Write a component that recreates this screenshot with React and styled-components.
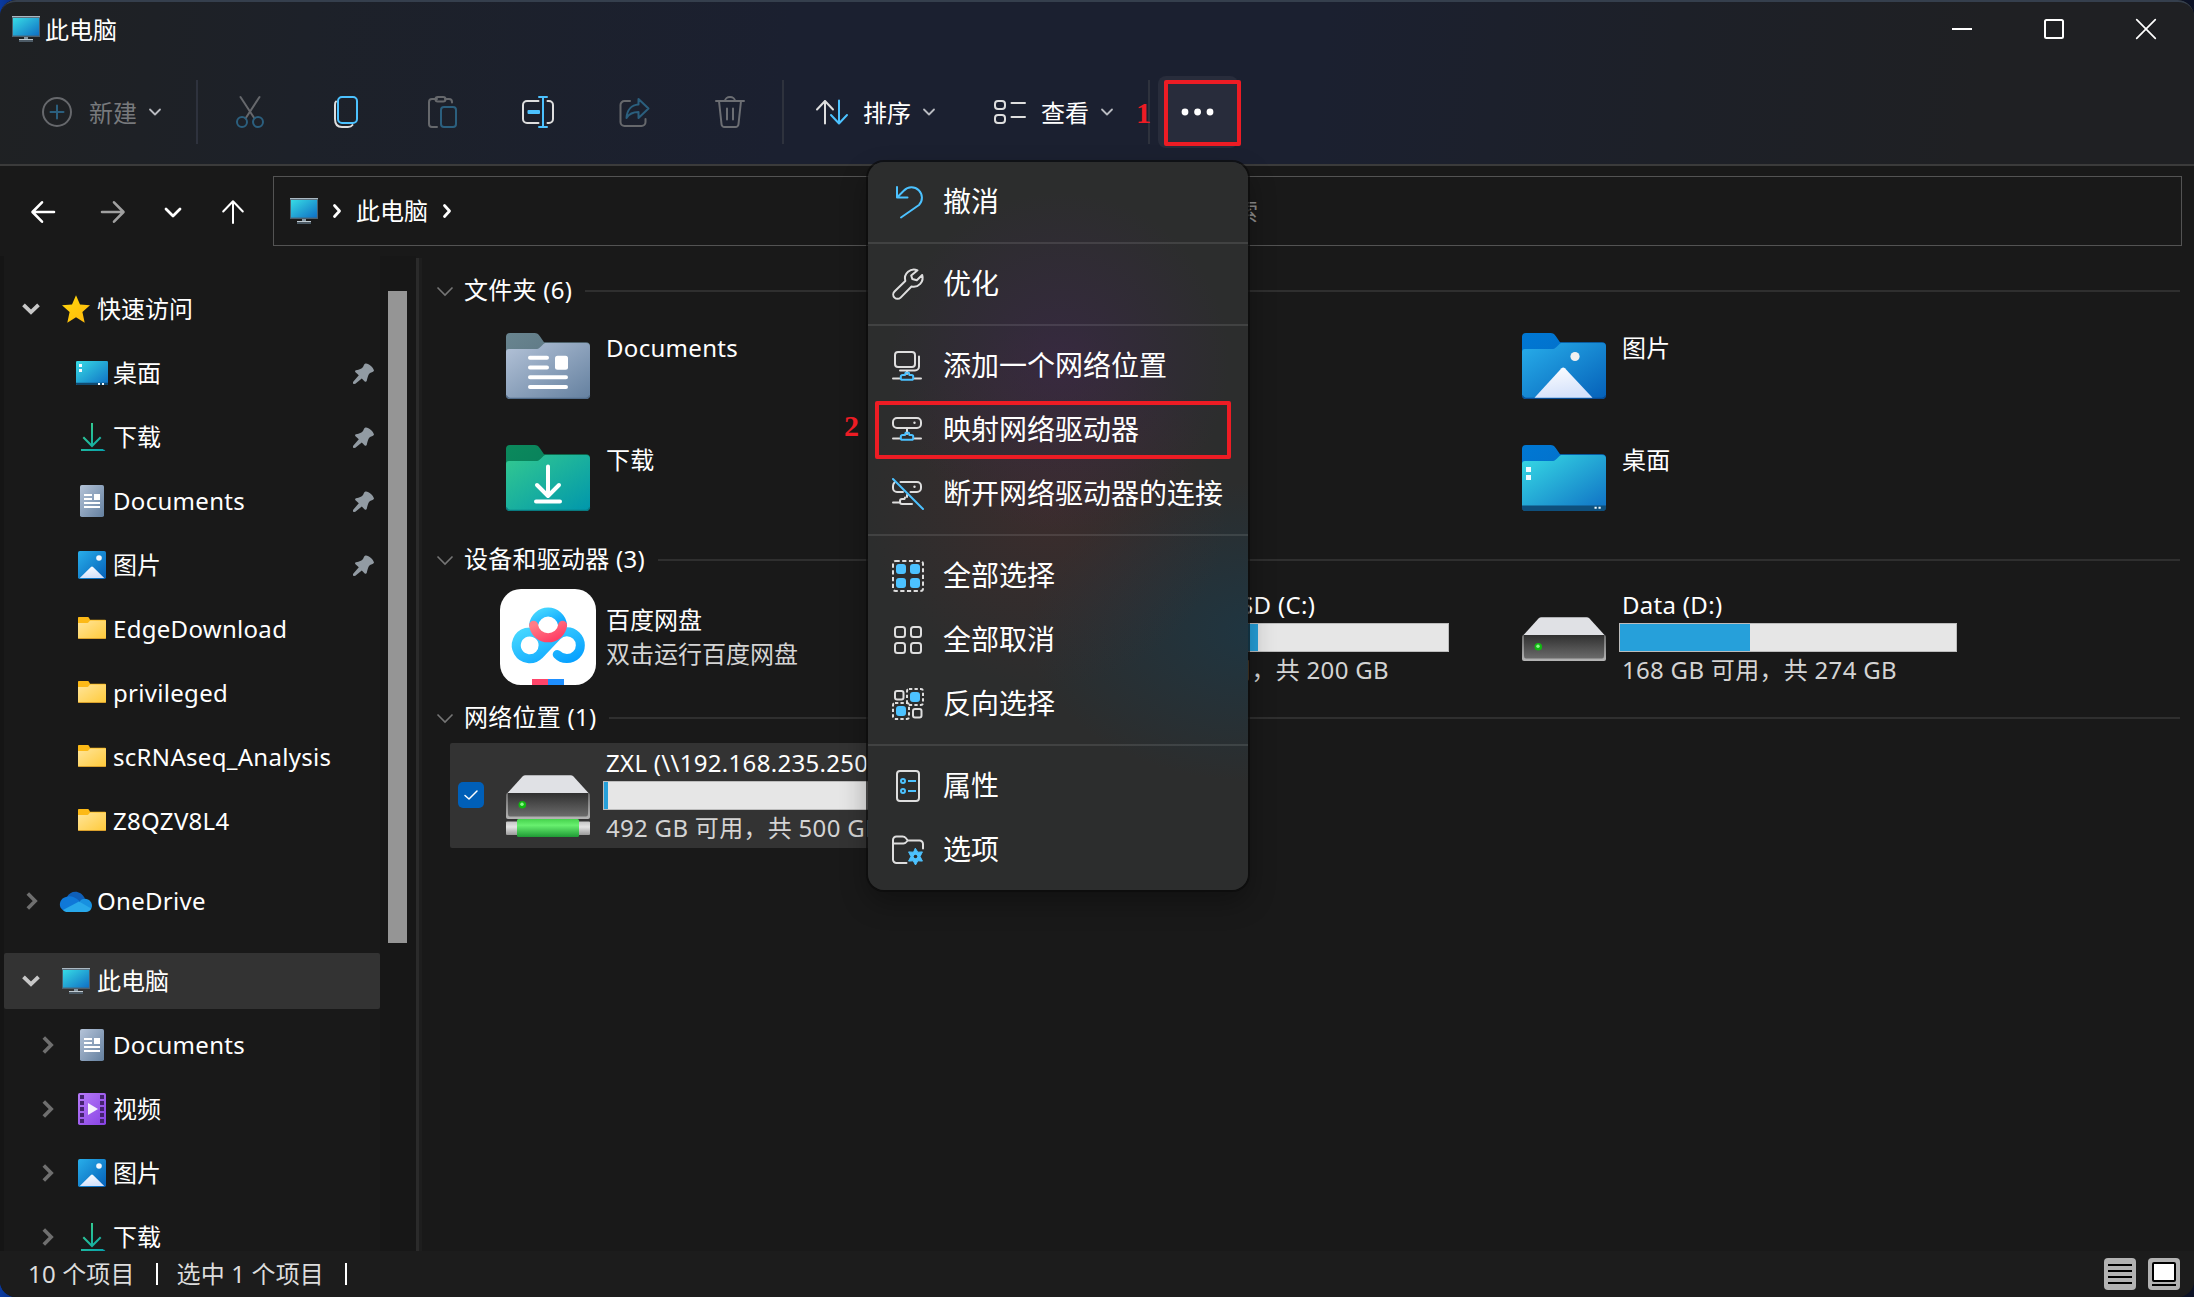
import React from "react";
import styled, { createGlobalStyle } from "styled-components";

const WHITE = "#ffffff";
const LINE = "#dedede";
const ACCENT = "#4cc2ff";
const DIM = "#66686c";
const DIM_ACCENT = "#2b5f7e";
const MARK = "#ed1c24";

const GlobalStyle = createGlobalStyle`
  *, *::before, *::after { box-sizing: border-box; }
  html, body { margin: 0; padding: 0; background: #0b1c4c; }
  body {
    font-family: "Noto Sans", "Noto Sans CJK SC", sans-serif;
    font-size: 24px;
    line-height: 32px;
    color: ${WHITE};
    overflow: hidden;
  }
  svg { display: block; flex: none; overflow: visible; }
`;

const Desktop = styled.div`
  width: 2194px;
  height: 1297px;
  background: linear-gradient(90deg, #0a3aa0 0, #0a1a48 40px, #0c1226 100%);
`;

const Window = styled.div`
  position: relative;
  width: 100%;
  height: 100%;
  display: flex;
  flex-direction: column;
  background: #191919;
  border-radius: 16px;
  overflow: hidden;
`;

const Header = styled.header`
  height: 166px;
  display: flex;
  flex-direction: column;
  border-top: 2px solid #353f4d;
  border-bottom: 2px solid #3b3b3b;
  border-radius: 16px 16px 0 0;
  background: linear-gradient(97deg, #1f2123 0%, #1d2129 14%, #1b2030 36%, #1b2030 60%, #1d2028 76%, #1f2023 90%);
`;

const TitleBar = styled.div`
  height: 54px;
  display: flex;
  align-items: center;
  padding: 0 2px 0 12px;
`;

const Title = styled.span`
  flex: 1;
  padding: 1px 0 0 5px;
  white-space: nowrap;
`;

const WindowButton = styled.div`
  width: 92px;
  height: 54px;
  display: flex;
  align-items: center;
  justify-content: center;
`;

const Toolbar = styled.div`
  flex: 1;
  display: flex;
  align-items: center;
  padding: 4px 0 0 42px;
`;

const ToolSeparator = styled.div`
  width: 2px;
  height: 64px;
  background: #2e323d;
`;

const ToolLabelButton = styled.div`
  display: flex;
  align-items: center;
  width: ${(p) => p.$width}px;
  margin-left: ${(p) => p.$left || 0}px;
  gap: ${(p) => p.$gap}px;
  color: ${(p) => (p.$disabled ? "#77797c" : WHITE)};

  span {
    padding-top: 2px;
    margin-right: ${(p) => 12 - p.$gap}px;
    white-space: nowrap;
  }
`;

const ToolIcons = styled.div`
  display: flex;
  width: 584px;
  padding-left: 4px;
`;

const ToolIconButton = styled.div`
  width: 96px;
  display: flex;
  justify-content: center;
`;

const MoreButton = styled.div`
  width: 80px;
  height: 72px;
  margin-left: 8px;
  border-radius: 8px;
  background: #282c3b;
  display: flex;
  align-items: center;
  justify-content: center;
`;

const NavBar = styled.nav`
  height: 90px;
  display: flex;
  align-items: center;
  padding: 0 12px 0 31px;
`;

const NavButton = styled.div`
  width: ${(p) => p.$width}px;
  padding-top: 2px;
  display: flex;
`;

const AddressBar = styled.div`
  flex: 1;
  height: 70px;
  border: 1px solid #535353;
  display: flex;
  align-items: center;
  padding: 0 16px;
`;

const Crumb = styled.div`
  display: flex;
  align-items: center;
  gap: 15px;
  width: 784px;
  white-space: nowrap;
`;

const SearchHint = styled.span`
  color: #8b8b8b;
  white-space: nowrap;
  width: 184px;
  text-align: right;
`;

const Body = styled.div`
  flex: 1;
  min-height: 0;
  display: flex;
`;

const Sidebar = styled.aside`
  width: 416px;
  display: flex;
  overflow: hidden;
  background: #171717;
  border-left: 4px solid #151515;
`;

const Tree = styled.div`
  width: 376px;
  display: flex;
  flex-direction: column;
  gap: 8px;
  padding-top: 25px;
  background: #191919;
`;

const TreeRow = styled.div`
  flex: none;
  height: 56px;
  display: flex;
  align-items: center;
  padding: 0 6px 0 ${(p) => 12 + p.$level * 16}px;
  margin-top: ${(p) => (p.$spaced ? 16 : 0)}px;
  background: ${(p) => (p.$selected ? "#333333" : "transparent")};
  border-radius: 2px;
`;

const Slot = styled.div`
  width: 32px;
  display: flex;
  justify-content: center;
  margin-right: ${(p) => p.$gap}px;
`;

const TreeLabel = styled.span`
  flex: 1;
  line-height: 28px;
  letter-spacing: ${(p) => (p.$latin ? "0.3px" : "normal")};
  white-space: nowrap;
`;

const ScrollThumb = styled.div`
  width: 19px;
  height: 652px;
  margin: 35px 0 0 8px;
  background: #959595;
`;

const Splitter = styled.div`
  width: 6px;
  margin-top: 2px;
  background: linear-gradient(90deg, #2b2b2b 50%, #1e1e1e 50%);
`;

const Content = styled.main`
  flex: 1;
  min-width: 0;
  padding: 19px 14px 0 15px;
`;

const GroupHeader = styled.div`
  height: 32px;
  display: flex;
  align-items: center;
  margin: ${(p) => p.$top}px 0 ${(p) => p.$bottom}px;

  span {
    padding: 0 13px 2px 11px;
    letter-spacing: 0.25px;
    white-space: nowrap;
  }

  &::after {
    content: "";
    flex: 1;
    height: 2px;
    background: #2f2f2f;
  }
`;

const ItemGrid = styled.div`
  display: grid;
  grid-template-columns: repeat(3, 508px);
  grid-auto-rows: ${(p) => p.$row}px;
  margin-left: 13px;
`;

const Item = styled.div`
  display: flex;
  align-items: center;
  grid-column: ${(p) => p.$column};
  background: ${(p) => (p.$selected ? "#333333" : "transparent")};
  border-radius: 2px;
  padding-bottom: ${(p) => p.$lift || 0}px;
`;

const CheckSlot = styled.div`
  width: 50px;
  padding-left: 8px;
`;

const CheckBox = styled.div`
  width: 26px;
  height: 26px;
  border-radius: 5px;
  background: #005fb8;
  display: flex;
  align-items: center;
  justify-content: center;
`;

const ItemText = styled.div`
  align-self: ${(p) => (p.$top ? "flex-start" : "center")};
  padding: ${(p) => (p.$top ? "22px" : "0")} 0 0 10px;
  display: flex;
  flex-direction: column;
  gap: ${(p) => (p.$tight ? 1 : 2)}px;
  letter-spacing: ${(p) => (p.$cjk ? "normal" : "0.3px")};
  white-space: nowrap;
`;

const SubText = styled.span`
  color: #d4d4d4;
`;

const Meter = styled.div`
  width: 338px;
  height: 29px;
  margin: 1px 0 1px -3px;
  border: 1px solid #bcbcbc;
  background: #e6e6e6;
`;

const MeterFill = styled.div`
  width: ${(p) => p.$percent}%;
  height: 100%;
  background: #26a0da;
`;

const StatusBar = styled.footer`
  height: 46px;
  display: flex;
  align-items: center;
  padding: 0 14px 0 28px;
  background: #1c1c1c;
  color: #dddddd;
  white-space: nowrap;
`;

const StatusText = styled.span`
  letter-spacing: 0.15px;
`;

const StatusDivider = styled.div`
  width: 2px;
  height: 22px;
  margin: 0 19px 0 21px;
  background: ${WHITE};
`;

const ViewModes = styled.div`
  margin-left: auto;
  display: flex;
  gap: 12px;
`;

const Menu = styled.div`
  position: absolute;
  left: 868px;
  top: 162px;
  width: 380px;
  border-radius: 16px;
  overflow: hidden;
  font-size: 28px;
  line-height: 40px;
  background:
    radial-gradient(circle 170px at 192px 200px, rgba(64, 38, 82, 0.5), transparent),
    radial-gradient(circle 180px at 180px 345px, rgba(80, 44, 44, 0.42), transparent),
    radial-gradient(ellipse 230px 150px at 390px 470px, rgba(24, 58, 76, 0.65), transparent),
    #2c2d2d;
`;

const MenuShadow = styled.div`
  position: absolute;
  left: 868px;
  top: 162px;
  width: 380px;
  height: 728px;
  border-radius: 16px;
  box-shadow: 0 0 0 2px rgba(12, 12, 12, 0.7), 0 12px 28px rgba(0, 0, 0, 0.32);
`;

const MenuGroup = styled.div`
  padding: 8px 0;
  & + & { border-top: 2px solid rgba(255, 255, 255, 0.1); }
`;

const MenuItem = styled.div`
  height: 64px;
  display: flex;
  align-items: center;
  gap: 19px;
  padding-left: 24px;
  white-space: nowrap;

  span { padding-bottom: 2px; }
`;

const MarkBox = styled.div`
  position: absolute;
  left: ${(p) => p.$x}px;
  top: ${(p) => p.$y}px;
  width: ${(p) => p.$w}px;
  height: ${(p) => p.$h}px;
  border: 4px solid ${MARK};
  border-radius: 2px;
`;

const MarkNumber = styled.span`
  position: absolute;
  left: ${(p) => p.$x}px;
  top: ${(p) => p.$y}px;
  font: bold 30px/32px "Liberation Serif", serif;
  color: ${MARK};
`;

/* ---------- icons ---------- */

const Stroke = ({ w = 32, h = 32, color = LINE, sw = 2, children }) => (
  <svg width={w} height={h} viewBox={`0 0 ${w} ${h}`} fill="none" stroke={color} strokeWidth={sw} strokeLinecap="round" strokeLinejoin="round">
    {children}
  </svg>
);

const DefsSvg = styled.svg`
  position: absolute;
`;

const Gradients = () => (
  <DefsSvg width="0" height="0">
    <defs>
      {[
        ["gScreen", "#37dbe5", "#0f6fc4"],
        ["gDocs", "#b4c3d8", "#64809f"],
        ["gDocsTab", "#698590", "#526a78"],
        ["gDown", "#33c990", "#0096ac"],
        ["gDownTab", "#0b8a5c", "#07745c"],
        ["gPics", "#28aeea", "#0560b8"],
        ["gBlueTab", "#0078d4", "#0668c0"],
        ["gFolder", "#ffe59a", "#ffca3a"],
        ["gVideo", "#b77bf8", "#8741e4"],
        ["gStar", "#ffd80c", "#ffb80c"],
        ["gBaidu", "#46d7ff", "#06a0ff"],
        ["gBaiduRed", "#ff7d86", "#ff3b64"],
      ].map(([id, a, b]) => (
        <linearGradient key={id} id={id} x1="0" y1="0" x2="1" y2="1">
          <stop offset="0" stopColor={a} />
          <stop offset="1" stopColor={b} />
        </linearGradient>
      ))}
      <linearGradient id="gArrow" gradientUnits="userSpaceOnUse" x1="4" y1="4" x2="24" y2="28">
        <stop offset="0" stopColor="#35cc90" />
        <stop offset="1" stopColor="#08a2ac" />
      </linearGradient>
      <linearGradient id="gDrive" x1="0" y1="0" x2="0" y2="1">
        <stop offset="0" stopColor="#303030" />
        <stop offset="1" stopColor="#6b6b6b" />
      </linearGradient>
      <linearGradient id="gRim" x1="0" y1="0" x2="0" y2="1">
        <stop offset="0" stopColor="#6c6c6c" />
        <stop offset="1" stopColor="#b4b4b4" />
      </linearGradient>
      <linearGradient id="gTube" x1="0" y1="0" x2="0" y2="1">
        <stop offset="0" stopColor="#45d24c" />
        <stop offset="0.35" stopColor="#68f06f" />
        <stop offset="1" stopColor="#1f9a35" />
      </linearGradient>
      <linearGradient id="gCable" x1="0" y1="0" x2="0" y2="1">
        <stop offset="0" stopColor="#c4c4c4" />
        <stop offset="0.4" stopColor="#e4e4e4" />
        <stop offset="1" stopColor="#9a9a9a" />
      </linearGradient>
      <linearGradient id="gSnow" x1="0" y1="0" x2="0.3" y2="1">
        <stop offset="0" stopColor="#ffffff" />
        <stop offset="1" stopColor="#d5e2fb" />
      </linearGradient>
    </defs>
  </DefsSvg>
);

const MonitorIcon = () => (
  <svg width="28" height="26" viewBox="0 0 28 26">
    <rect width="28" height="21" rx="0.6" fill="#4d5f6d" />
    <rect width="28" height="1.2" fill="#a9b8c2" />
    <rect x="1" y="2" width="26" height="17.6" fill="url(#gScreen)" />
    <path d="M12 21h4v2h-4z" fill="#8596a2" />
    <path d="M7 23h14v1H7z" fill="#c0cad1" />
    <path d="M7 24h14v2H7z" fill="#4c5a65" />
  </svg>
);

const PlusCircle = () => (
  <Stroke w={30} h={30} color={DIM}>
    <circle cx="15" cy="15" r="14" />
    <path d="M15 8.5v13M8.5 15h13" stroke={DIM_ACCENT} />
  </Stroke>
);

const SmallChevron = ({ color = "#b8bac0" }) => (
  <Stroke w={12} h={8} color={color} sw={1.8}>
    <path d="M1 1.5 6 6.5 11 1.5" />
  </Stroke>
);

const CutIcon = () => (
  <Stroke color={DIM}>
    <path d="M6.5 1 20.5 22.5M25.5 1 11.5 22.5" />
    <g stroke={DIM_ACCENT}>
      <circle cx="8" cy="26" r="5" />
      <circle cx="24" cy="26" r="5" />
    </g>
  </Stroke>
);

const CopyIcon = () => (
  <Stroke>
    <path d="M6 5.5C4.8 6.5 5 8 5 10v13c0 5 2.500 8 7 8h6c2 0 3.500-.5 4.500-2" />
    <rect x="8" y="1" width="19" height="26" rx="4" stroke={ACCENT} />
  </Stroke>
);

const PasteIcon = () => (
  <Stroke color={DIM}>
    <path d="M11 3H6a3 3 0 0 0-3 3v22a3 3 0 0 0 3 3h5M19 3h4a3 3 0 0 1 3 3v.5" />
    <rect x="9.5" y="1" width="10" height="4.6" rx="2.3" />
    <rect x="15" y="11" width="15" height="20" rx="3" stroke={DIM_ACCENT} />
  </Stroke>
);

const RenameIcon = () => (
  <Stroke>
    <path d="M16.5 5H5a4 4 0 0 0-4 4v14a4 4 0 0 0 4 4h11.500M25.500 5h1.500a4 4 0 0 1 4 4v14a4 4 0 0 1-4 4h-1.500" />
    <path d="M21 1v30M17 1h8M17 31h8" stroke={ACCENT} />
    <rect x="5.5" y="14" width="12.5" height="4" rx="1" fill={ACCENT} stroke="none" />
  </Stroke>
);

const ShareIcon = () => (
  <Stroke color={DIM}>
    <path d="M12 5H6.500a4 4 0 0 0-4 4v17a4 4 0 0 0 4 4h17a4 4 0 0 0 4-4v-3" />
    <path d="M20.500 3l10 9.500-10 9.500v-6c-6 0-9.500 2-12 6 .5-8 5-13 12-13.500z" stroke={DIM_ACCENT} />
  </Stroke>
);

const TrashIcon = () => (
  <Stroke color="#6c6e73">
    <path d="M2 5h28M11 5a5 4 0 0 1 10 0M5 5l2.500 23a3 3 0 0 0 3 3h11a3 3 0 0 0 3-3L27 5M13 12.500v11M19 12.500v11" />
  </Stroke>
);

const SortIcon = () => (
  <Stroke w={32} h={24}>
    <path d="M9 23.500V1M1 9.500 9 1l8 8.500" />
    <path d="M23 .5V23M15 15l8 8.500 8-8.500" stroke={ACCENT} />
  </Stroke>
);

const ViewIcon = () => (
  <Stroke w={32} h={24}>
    <rect x="1" y="1" width="10" height="8" rx="3" />
    <rect x="1" y="15" width="10" height="8" rx="3" />
    <path d="M17.500 3H31M17.500 17H31" />
  </Stroke>
);

const DotsIcon = () => (
  <svg width="34" height="8" viewBox="0 0 34 8" fill={WHITE}>
    <circle cx="4" cy="4" r="3.4" />
    <circle cx="16.6" cy="4" r="3.4" />
    <circle cx="29" cy="4" r="3.4" />
  </svg>
);

const ArrowLeft = () => (
  <Stroke w={24} h={22} color={WHITE} sw={2.6}>
    <path d="M23 11H2M11 1.300 1.500 11l9.500 9.700" />
  </Stroke>
);
const ArrowRight = () => (
  <Stroke w={24} h={22} color="#a0a0a0" sw={2.6}>
    <path d="M1 11h21M13 1.300 22.500 11 13 20.700" />
  </Stroke>
);
const ArrowDown = () => (
  <Stroke w={18} h={11} color={WHITE} sw={2.8}>
    <path d="M2 2l7 7 7-7" />
  </Stroke>
);
const ArrowUp = () => (
  <Stroke w={22} h={24} color={WHITE} sw={2}>
    <path d="M11 23V1.500M1.200 11.500 11 1.200l9.800 10.300" />
  </Stroke>
);
const CrumbChevron = () => (
  <Stroke w={8} h={14} color={WHITE} sw={2.8}>
    <path d="M1.500 1.500 6.500 7l-5 5.500" />
  </Stroke>
);

const TreeChevron = ({ open }) =>
  open ? (
    <svg width="18" height="12" viewBox="1 0 18 12" fill="none" stroke="#c8c8c8" strokeWidth="3.8">
      <path d="M1.500 1.800 9 9.200l7.500-7.400" />
    </svg>
  ) : (
    <svg width="12" height="18" viewBox="0 0 12 18" fill="none" stroke="#6f6f6f" strokeWidth="3.6">
      <path d="M1.800 1.500 9.200 9l-7.400 7.500" />
    </svg>
  );

const GroupChevron = () => (
  <svg width="16" height="9" viewBox="0 1 16 9" fill="none" stroke="#757575" strokeWidth="1.6">
    <path d="M.5 1.500 8 9 15.500 1.500" />
  </svg>
);

const PinIcon = () => (
  <svg width="21" height="21" viewBox="0 0 21 21" fill="#929ba3">
    <path d="M12.500 0.500C15.500 0 20.500 4.500 21 7.500c0 1.400-2.500 1.700-4 2.500-1.800 1.200-2.300 4-3.300 8-.4 1-1.300 1-2 .4L8.800 15.500 2 21 0 20.800 0 19l5.800-6.700L2.500 9.200c-.7-.8-.5-1.700.5-2C6.500 6.500 8.500 6 10 4c1-1.500 1-3.300 2.500-3.500z" />
  </svg>
);

const StarIcon = () => (
  <svg width="28" height="28" viewBox="0 0 28 28">
    <path d="M14 .3l4 9.200 10 .8-7.600 6.700 2.300 10.700L14 22.200l-8.700 5.500 2.300-10.700L0 10.300l10-.8z" fill="url(#gStar)" />
  </svg>
);

const DesktopIcon = () => (
  <svg width="32" height="24" viewBox="0 0 32 24">
    <rect width="32" height="24" rx="1.3" fill="url(#gScreen)" />
    <path d="M0 21.700h32v1a1.300 1.300 0 0 1-1.300 1.300H1.300A1.300 1.300 0 0 1 0 22.700z" fill="#114a70" />
    <path d="M3 3h3v3H3zM3 8h3v3H3zM22 22h2v2h-2zM26 22h2v2h-2z" fill="#f4fbff" />
  </svg>
);

const DownloadIcon = () => (
  <svg width="24" height="28" viewBox="0 0 24 28" fill="none" stroke="url(#gArrow)" strokeWidth="2">
    <path d="M12 0v23M3.300 14.300 12 23l8.700-8.700M1 27h22.010l-.01-.01" />
  </svg>
);

const DocumentIcon = () => (
  <svg width="24" height="32" viewBox="0 0 24 32">
    <rect width="24" height="32" rx="1.8" fill="url(#gDocs)" />
    <path d="M4 9h8v2H4zM4 13h8v2H4zM14 9h6v6h-6zM4 17h16v2H4zM4 21h16v2H4z" fill="#fff" />
  </svg>
);

const PictureIcon = () => (
  <svg width="28" height="28" viewBox="0 0 28 28">
    <rect width="28" height="28" rx="1.8" fill="url(#gPics)" />
    <circle cx="21" cy="7" r="2.8" fill="#f3f8fd" />
    <path d="M1.800 27 12.700 16.200q1.300-1.300 2.600 0L26.200 27z" fill="url(#gSnow)" />
  </svg>
);

const SmallFolder = () => (
  <svg width="28" height="22" viewBox="0 1 28 22">
    <path d="M0 .8A.8.8 0 0 1 .8 0h8.400c1.300 0 2 .5 2.800 2.800H27a1 1 0 0 1 1 1V20H0z" fill="#fcb916" />
    <path d="M0 6h9.500c1.500 0 1.500-2.500 3-2.500H28v17.300a1 1 0 0 1-1 1H1a1 1 0 0 1-1-1z" fill="url(#gFolder)" />
    <path d="M0 21h28a1 1 0 0 1-1 1H1a1 1 0 0 1-1-1z" fill="#d9a02c" />
  </svg>
);

const CloudIcon = () => (
  <svg width="32" height="21" viewBox="0 0 32 21">
    <path d="M7 6C10-.5 20-2.200 25 7.500L17 12z" fill="#0f5fb8" />
    <path d="M8 5.500c3-.8 6 .5 9 2.500l3.500 3L4 19.500C-.500 17.500-1 13 1 9.500 2.500 7 5 5.800 8 5.500z" fill="#0f78d8" />
    <path d="M20 10c2-2.500 5.500-3 8-1.500 4 2 5 6.500 3 9.500l-11-5z" fill="#1890e0" />
    <path d="M3 19l16-8.500L31.300 17.500C30.500 19.600 28.500 21 26 21H7.500C5.500 21 4 20.500 3 19z" fill="#28a8ea" />
  </svg>
);

const VideoIcon = () => (
  <svg width="28" height="32" viewBox="0 0 28 32">
    <rect width="28" height="32" rx="1.8" fill="url(#gVideo)" />
    {[2, 8, 14, 20, 26].map((y) => (
      <path key={y} d={`M2 ${y}h4v4H2zM22 ${y}h4v4h-4z`} fill="#45236f" />
    ))}
    <path d="M10 10v12l10-6z" fill="#f5effc" />
  </svg>
);

const Canvas = ({ children }) => (
  <svg width="96" height="96" viewBox="0 0 96 96">
    {children}
  </svg>
);

const FolderShape = ({ tab, front, edge, children }) => (
  <Canvas>
    <g transform="translate(6 15)">
      <path d="M0 4a4 4 0 0 1 4-4h24.500c2.500 0 4 1.300 5.200 3L38 9.300h42a4 4 0 0 1 4 4V60H0z" fill={`url(#${tab})`} />
      <path d="M0 19a3 3 0 0 1 3-3h26.500c2.500 0 4-1 5.500-2.600l2-2C38 10.500 39 10 40.500 10H80a4 4 0 0 1 4 4v48a4 4 0 0 1-4 4H4a4 4 0 0 1-4-4z" fill={`url(#${front})`} />
      <path d="M.3 62.500a4 4 0 0 0 3.700 2.800h76a4 4 0 0 0 3.700-2.800" fill="none" stroke={edge} strokeWidth="1.2" />
      {children}
    </g>
  </Canvas>
);

const DocsFolder = () => (
  <FolderShape tab="gDocsTab" front="gDocs" edge="#526c8a">
    <path d="M24 24.800h17M24 34.500h17M24 44.300h36M24 54h36" stroke="#fff" strokeWidth="4" strokeLinecap="round" />
    <rect x="49" y="22.7" width="13" height="14" rx="2.5" fill="#fff" />
  </FolderShape>
);

const DownFolder = () => (
  <FolderShape tab="gDownTab" front="gDown" edge="#087a80">
    <path d="M42 21.500V50M31 40l11 11 11-11M30 56.500h24" fill="none" stroke="#fff" strokeWidth="4" strokeLinecap="round" strokeLinejoin="round" />
  </FolderShape>
);

const PicsFolder = () => (
  <FolderShape tab="gBlueTab" front="gPics" edge="#074a92">
    <circle cx="53" cy="23.5" r="4.6" fill="#f0f0f0" />
    <path d="M12.500 64.800 39.500 35.300q1.700-1.600 3.400 0L70.500 64.800z" fill="url(#gSnow)" />
  </FolderShape>
);

const DeskFolder = () => (
  <FolderShape tab="gBlueTab" front="gScreen" edge="#0c4476">
    <path d="M0 60.500h84V62a4 4 0 0 1-4 4H4a4 4 0 0 1-4-4z" fill="#0e4f7c" />
    <path d="M4 22h5v5H4zM4 30h5v5H4zM72.500 61.700h2.200v2h-2.200zM76.500 61.700h2.200v2h-2.200z" fill="#f2fbff" />
  </FolderShape>
);

const DriveIcon = ({ network }) => (
  <Canvas>
    <g transform="translate(6 28)">
      <path d="M0 20q0-2 1.500-2h81q1.500 0 1.500 2v22q0 2-2 2H2q-2 0-2-2z" fill="url(#gRim)" />
      <path d="M2 18h80v21q0 2.500-2 2.500H4q-2 0-2-2.500z" fill="url(#gDrive)" />
      <path d="M1.500 18 16.500 1.500Q17.700.2 19.500.2h45q1.800 0 3 1.300L82.500 18z" fill="#e0e1e5" />
      <circle cx="16.3" cy="29.8" r="3.8" fill="#12b812" />
      <circle cx="16" cy="29.3" r="1.7" fill="#8cf58c" />
      {network && (
        <>
          <rect y="46.5" width="84" height="13.5" rx="1" fill="url(#gCable)" />
          <rect x="11" y="44" width="62" height="18" rx="1.5" fill="url(#gTube)" />
        </>
      )}
    </g>
  </Canvas>
);

const BaiduIcon = () => (
  <Canvas>
    <rect width="96" height="96" rx="21" fill="#fff" />
    <g fill="none" strokeWidth="9" strokeLinecap="round">
      <path
        d="M39.200 65.800A13.400 13.400 0 1 1 43.100 56.300M39.200 65.800L57.200 47A13.400 13.400 0 1 1 57.200 65.400M43.100 56.300A13.400 13.400 0 0 1 39.200 65.800"
        stroke="url(#gBaidu)"
      />
      <path d="M33.600 36a14.600 14.600 0 0 1 29 0" stroke="url(#gBaidu)" />
      <path d="M33.600 36.300a14.600 14.200 0 0 0 29 0" stroke="url(#gBaiduRed)" />
    </g>
    <path d="M32 90h16v6H32z" fill="#ff4469" />
    <path d="M48 90h16v6H48z" fill="#1e8fff" />
  </Canvas>
);

const UndoIcon = () => (
  <Stroke color={ACCENT}>
    <path d="M5 1v10.500h10.500M5.500 11 12 4.500a10.400 10.400 0 0 1 15 14.500L9 31.500" />
  </Stroke>
);

const WrenchIcon = () => (
  <Stroke>
    <path d="M25.500 2.300A9 9 0 0 0 13.300 13L2.500 23.500a4.300 4.300 0 0 0 6.100 6.100L19.500 18.500A9 9 0 0 0 30.200 7l-5.400 5.200-4.500-1.200L19.200 7.500z" />
  </Stroke>
);

const Plug = ({ y = 0, color = ACCENT }) => (
  <g transform={`translate(0 ${y})`} stroke={color}>
    <path d="M10.500 21h2.500l.6-2.200h3.200l.6 2.200h2.200a1.600 1.600 0 0 1 1.600 1.600v1.600a1.600 1.600 0 0 1-1.600 1.600h-9.200a1.600 1.600 0 0 1-1.600-1.600v-1.600A1.600 1.600 0 0 1 10.500 21z" />
  </g>
);

const AddNetworkIcon = () => (
  <Stroke>
    <rect x="3" y="2" width="20" height="15" rx="3" />
    <path d="M27 6.500v10a4 4 0 0 1-4 4H8M15 21v3M1 28.500h6.500M22.500 28.500H29" />
    <Plug y={4} />
  </Stroke>
);

const MapDriveIcon = () => (
  <Stroke>
    <rect x="1" y="4" width="28" height="10" rx="4" />
    <circle cx="22.5" cy="8.7" r="1.2" fill={LINE} stroke="none" />
    <path d="M15 14v6M1 24.500h6.500M22.500 24.500H29" />
    <Plug />
  </Stroke>
);

const UnmapDriveIcon = () => (
  <Stroke>
    <path d="M8.500 4H25a4 4 0 0 1 4 4v2a4 4 0 0 1-4 4h-6.500M2.500 4.500C1.500 5.500 1 6.500 1 8v2a4 4 0 0 0 4 4h6M15 17v2M1 24.500h6.500M13 19.500l-.5 1.500H10a2 2 0 0 0-2 2v1a2 2 0 0 0 2 2h10" />
    <circle cx="22.5" cy="8.7" r="1.2" fill={LINE} stroke="none" />
    <path d="M1 1l30 30" stroke={ACCENT} />
  </Stroke>
);

const SelectAllIcon = () => (
  <svg width="32" height="32" viewBox="0 0 32 32" fill="none">
    <rect x="1" y="1" width="30" height="30" rx="2.5" stroke={LINE} strokeWidth="2" strokeDasharray="4.2 2.5" />
    {[[4, 4], [18, 4], [4, 18], [18, 18]].map(([x, y]) => (
      <rect key={`${x}-${y}`} x={x} y={y} width="10" height="10" rx="3" fill={ACCENT} />
    ))}
  </svg>
);

const SelectNoneIcon = () => (
  <Stroke>
    {[[3, 3], [19, 3], [3, 19], [19, 19]].map(([x, y]) => (
      <rect key={`${x}-${y}`} x={x} y={y} width="10" height="10" rx="2.5" />
    ))}
  </Stroke>
);

const InvertIcon = () => (
  <svg width="32" height="32" viewBox="0 0 32 32" fill="none" stroke={LINE} strokeWidth="2">
    <rect x="3" y="3" width="8.5" height="8.5" rx="2" />
    <rect x="21" y="21" width="8.5" height="8.5" rx="2" />
    <rect x="15" y="1" width="16" height="16" rx="2" strokeDasharray="3.3 2.2" />
    <rect x="1" y="15" width="16" height="16" rx="2" strokeDasharray="3.3 2.2" />
    <rect x="18" y="4" width="10" height="10" rx="3" fill={ACCENT} stroke="none" />
    <rect x="4" y="18" width="10" height="10" rx="3" fill={ACCENT} stroke="none" />
  </svg>
);

const PropertiesIcon = () => (
  <Stroke>
    <rect x="5" y="1" width="22" height="30" rx="3" />
    <g stroke={ACCENT} strokeLinecap="butt">
      <circle cx="11" cy="11" r="2" />
      <circle cx="11" cy="21" r="2" />
      <path d="M16 11h8M16 21h8" />
    </g>
  </Stroke>
);

const OptionsIcon = () => (
  <Stroke>
    <path d="M14.500 29H4.500A3.500 3.500 0 0 1 1 25.500V6a3.500 3.500 0 0 1 3.500-3.500h6c1.500 0 2.500.5 3.300 1.500l2 2.500H27.500A3.500 3.500 0 0 1 31 10v4.500M1 9.500h10.500c1.500 0 2.500-.7 4.300-3" />
    <path
      d="M23.500 14.500l2.300 3.700 4.600-.3-2.300 4.600 2.300 4.600-4.600-.3-2.300 4.200-2.300-4.200-4.600.3 2.300-4.600-2.300-4.600 4.600.3z"
      fill={ACCENT}
      stroke={ACCENT}
      strokeWidth="1"
    />
    <circle cx="23.5" cy="22.5" r="1.8" fill="#2c2c2c" stroke="none" />
  </Stroke>
);

const DetailsViewIcon = () => (
  <svg width="32" height="32" viewBox="0 0 32 32">
    <rect width="32" height="32" rx="4" fill="#b2b2b2" />
    <path d="M4 6h24v2H4zM4 12h24v2H4zM4 18h24v2H4zM4 24h24v2H4z" fill="#000" />
  </svg>
);

const TilesViewIcon = () => (
  <svg width="32" height="32" viewBox="0 0 32 32">
    <rect width="32" height="32" rx="4" fill="#b2b2b2" />
    <rect x="5" y="5" width="22" height="18" rx="1" fill="#fff" stroke="#000" strokeWidth="2" />
    <path d="M4 26h24v2H4z" fill="#000" />
  </svg>
);

/* ---------- data ---------- */

const treeRows = [
  { label: "快速访问", icon: StarIcon, level: 0, chevron: "open" },
  { label: "桌面", icon: DesktopIcon, level: 1, pin: true },
  { label: "下载", icon: DownloadIcon, level: 1, pin: true },
  { label: "Documents", latin: true, icon: DocumentIcon, level: 1, pin: true },
  { label: "图片", icon: PictureIcon, level: 1, pin: true },
  { label: "EdgeDownload", latin: true, icon: SmallFolder, level: 1 },
  { label: "privileged", latin: true, icon: SmallFolder, level: 1 },
  { label: "scRNAseq_Analysis", latin: true, icon: SmallFolder, level: 1 },
  { label: "Z8QZV8L4", latin: true, icon: SmallFolder, level: 1 },
  { label: "OneDrive", latin: true, icon: CloudIcon, level: 0, chevron: "closed", spaced: true },
  { label: "此电脑", icon: MonitorIcon, level: 0, chevron: "open", spaced: true, selected: true },
  { label: "Documents", latin: true, icon: DocumentIcon, level: 1, chevron: "closed" },
  { label: "视频", icon: VideoIcon, level: 1, chevron: "closed" },
  { label: "图片", icon: PictureIcon, level: 1, chevron: "closed" },
  { label: "下载", icon: DownloadIcon, level: 1, chevron: "closed" },
];

const folders = [
  { label: "Documents", icon: DocsFolder, column: 1 },
  { label: "图片", icon: PicsFolder, column: 3 },
  { label: "下载", icon: DownFolder, column: 1 },
  { label: "桌面", icon: DeskFolder, column: 3 },
];

const menuGroups = [
  [["撤消", UndoIcon]],
  [["优化", WrenchIcon]],
  [
    ["添加一个网络位置", AddNetworkIcon],
    ["映射网络驱动器", MapDriveIcon],
    ["断开网络驱动器的连接", UnmapDriveIcon],
  ],
  [
    ["全部选择", SelectAllIcon],
    ["全部取消", SelectNoneIcon],
    ["反向选择", InvertIcon],
  ],
  [
    ["属性", PropertiesIcon],
    ["选项", OptionsIcon],
  ],
];

const Drive = ({ label, percent, detail, network, selected, column }) => (
  <Item $column={column} $selected={selected} $lift={1}>
    <CheckSlot>
      {selected && (
        <CheckBox>
          <Stroke w={14} h={10} color={WHITE} sw={1.5}>
            <path d="M1 5.500 5 9 13 1" />
          </Stroke>
        </CheckBox>
      )}
    </CheckSlot>
    <DriveIcon network={network} />
    <ItemText $tight>
      <span>{label}</span>
      <Meter>
        <MeterFill $percent={percent} />
      </Meter>
      <SubText>{detail}</SubText>
    </ItemText>
  </Item>
);

export default function App() {
  return (
    <Desktop>
      <GlobalStyle />
      <Gradients />
      <Window>
        <Header>
          <TitleBar>
            <MonitorIcon />
            <Title>此电脑</Title>
            <WindowButton>
              <Stroke w={20} h={2} color={WHITE}>
                <path d="M1 1h18" strokeLinecap="square" />
              </Stroke>
            </WindowButton>
            <WindowButton>
              <Stroke w={20} h={20} color={WHITE}>
                <rect x="1" y="1" width="18" height="18" rx="1.5" />
              </Stroke>
            </WindowButton>
            <WindowButton>
              <Stroke w={20} h={20} color={WHITE} sw={1.7}>
                <path d="M.7.7l18.600 18.600M19.300.7.7 19.300" />
              </Stroke>
            </WindowButton>
          </TitleBar>
          <Toolbar>
            <ToolLabelButton $width={154} $gap={17} $disabled>
              <PlusCircle />
              <span>新建</span>
              <SmallChevron />
            </ToolLabelButton>
            <ToolSeparator />
            <ToolIcons>
              {[CutIcon, CopyIcon, PasteIcon, RenameIcon, ShareIcon, TrashIcon].map((Icon, i) => (
                <ToolIconButton key={i}>
                  <Icon />
                </ToolIconButton>
              ))}
            </ToolIcons>
            <ToolSeparator />
            <ToolLabelButton $width={178} $gap={15} $left={32}>
              <SortIcon />
              <span>排序</span>
              <SmallChevron />
            </ToolLabelButton>
            <ToolLabelButton $width={154} $gap={15}>
              <ViewIcon />
              <span>查看</span>
              <SmallChevron />
            </ToolLabelButton>
            <ToolSeparator />
            <MoreButton>
              <DotsIcon />
            </MoreButton>
          </Toolbar>
        </Header>

        <NavBar>
          <NavButton $width={70}><ArrowLeft /></NavButton>
          <NavButton $width={63}><ArrowRight /></NavButton>
          <NavButton $width={58}><ArrowDown /></NavButton>
          <NavButton $width={51}><ArrowUp /></NavButton>
          <AddressBar>
            <Crumb>
              <MonitorIcon />
              <CrumbChevron />
              <span>此电脑</span>
              <CrumbChevron />
            </Crumb>
            <SearchHint>在此电脑中搜索</SearchHint>
          </AddressBar>
        </NavBar>

        <Body>
          <Sidebar>
            <Tree>
              {treeRows.map((row, i) => (
                <TreeRow key={i} $level={row.level} $spaced={row.spaced} $selected={row.selected}>
                  <Slot $gap={12}>{row.chevron && <TreeChevron open={row.chevron === "open"} />}</Slot>
                  <Slot $gap={5}>
                    <row.icon />
                  </Slot>
                  <TreeLabel $latin={row.latin}>{row.label}</TreeLabel>
                  {row.pin && <PinIcon />}
                </TreeRow>
              ))}
            </Tree>
            <ScrollThumb />
          </Sidebar>
          <Splitter />
          <Content>
            <GroupHeader $top={0} $bottom={3}>
              <GroupChevron />
              <span>文件夹 (6)</span>
            </GroupHeader>
            <ItemGrid $row={112}>
              {folders.map((f) => (
                <Item key={f.label} $column={f.column}>
                  <CheckSlot />
                  <f.icon />
                  <ItemText $top>
                    <span>{f.label}</span>
                  </ItemText>
                </Item>
              ))}
            </ItemGrid>

            <GroupHeader $top={10} $bottom={9}>
              <GroupChevron />
              <span>设备和驱动器 (3)</span>
            </GroupHeader>
            <ItemGrid $row={105}>
              <Item $column={1} $lift={1}>
                <CheckSlot />
                <BaiduIcon />
                <ItemText $cjk>
                  <span>百度网盘</span>
                  <SubText>双击运行百度网盘</SubText>
                </ItemText>
              </Item>
              <Drive column={2} label="Windows-SSD (C:)" percent={43.5} detail="113 GB 可用，共 200 GB" />
              <Drive column={3} label="Data (D:)" percent={38.7} detail="168 GB 可用，共 274 GB" />
            </ItemGrid>

            <GroupHeader $top={12} $bottom={9}>
              <GroupChevron />
              <span>网络位置 (1)</span>
            </GroupHeader>
            <ItemGrid $row={105}>
              <Drive column={1} selected network label="ZXL (\\192.168.235.250)" percent={1.2} detail="492 GB 可用，共 500 GB" />
            </ItemGrid>
          </Content>
        </Body>

        <StatusBar>
          <StatusText>10 个项目</StatusText>
          <StatusDivider />
          <StatusText>选中 1 个项目</StatusText>
          <StatusDivider />
          <ViewModes>
            <DetailsViewIcon />
            <TilesViewIcon />
          </ViewModes>
        </StatusBar>

        <MenuShadow />
        <Menu>
          {menuGroups.map((group, i) => (
            <MenuGroup key={i}>
              {group.map(([label, Icon]) => (
                <MenuItem key={label}>
                  <Icon />
                  <span>{label}</span>
                </MenuItem>
              ))}
            </MenuGroup>
          ))}
        </Menu>

        <MarkNumber $x={1136} $y={97}>1</MarkNumber>
        <MarkBox $x={1164} $y={80} $w={77} $h={66} />
        <MarkNumber $x={844} $y={410}>2</MarkNumber>
        <MarkBox $x={875} $y={401} $w={356} $h={58} />
      </Window>
    </Desktop>
  );
}
